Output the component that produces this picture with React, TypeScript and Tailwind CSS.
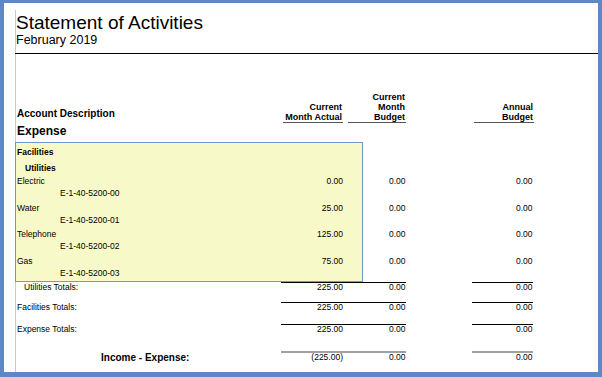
const accounts = [
  { name: 'Electric', code: 'E-1-40-5200-00', actual: '0.00' },
  { name: 'Water', code: 'E-1-40-5200-01', actual: '25.00' },
  { name: 'Telephone', code: 'E-1-40-5200-02', actual: '125.00' },
  { name: 'Gas', code: 'E-1-40-5200-03', actual: '75.00' },
];

const totals = [
  { label: 'Utilities Totals:', indent: 'pl-[8px]', h: 'h-[20px]', actual: '225.00' },
  { label: 'Facilities Totals:', indent: 'pl-[1px]', h: 'h-[22px]', actual: '225.00' },
  { label: 'Expense Totals:', indent: 'pl-[1px]', h: 'h-[27px]', actual: '225.00' },
];

function App() {
  return (
    <div className="w-[602px] h-[377px] bg-white border-solid border-[#5c88c8] border-t-[3px] border-l-[4px] border-r-[4px] border-b-[5px] overflow-hidden">
      <div className="ml-[11px] mt-[7px] h-[362px] border-l border-[#c9c9c9] pt-[3px] font-['Liberation_Sans',Arial,sans-serif] text-black">
        {/* Report title */}
        <div className="text-[19px] leading-[20px]">Statement of Activities</div>
        <div className="text-[12.5px] leading-[14px]">February 2019</div>
        <div className="mt-[6px] -ml-[1px] border-t border-black" />

        {/* Column headers */}
        <div className="h-[69px] flex items-end">
          <div className="w-[267px] pl-[1px] pb-[3px] text-[10px] font-bold leading-[12px]">Account Description</div>
          <div className="w-[60px] pr-[1px] text-right text-[9px] font-bold leading-[10px] border-b border-[#555]">
            <div>Current</div>
            <div>Month Actual</div>
          </div>
          <div className="ml-[5px] w-[58px] pr-[1px] text-right text-[9px] font-bold leading-[10px] border-b border-[#555]">
            <div>Current</div>
            <div>Month</div>
            <div>Budget</div>
          </div>
          <div className="ml-[68px] w-[60px] pr-[1px] text-right text-[9px] font-bold leading-[10px] border-b border-[#555]">
            <div>Annual</div>
            <div>Budget</div>
          </div>
        </div>

        <div className="mt-[1px] pl-[1px] text-[12px] font-bold leading-[14px]">Expense</div>

        {/* Detail rows */}
        <div className="mt-[4px] flex text-[8.5px]">
          <div className="-ml-[1px] w-[348px] border border-[#7598d0] bg-[#f8f9c8] pt-[3px]">
            <div className="h-[12px] leading-[12px] pl-[1px] font-bold">Facilities</div>
            <div className="mt-[4px] h-[12px] leading-[12px] pl-[9px] font-bold">Utilities</div>
            <div className="mt-[1px]">
              {accounts.map((a) => (
                <div key={a.code} className="h-[26.5px]">
                  <div className="h-[12px] leading-[12px] pl-[1px] pr-[19px] flex justify-between">
                    <span>{a.name}</span>
                    <span>{a.actual}</span>
                  </div>
                  <div className="h-[12px] leading-[12px] pl-[44px]">{a.code}</div>
                </div>
              ))}
            </div>
          </div>
          <div className="flex-1 pt-[33px]">
            {accounts.map((a) => (
              <div key={a.code} className="h-[26.5px] flex leading-[12px]">
                <div className="w-[43px] pr-[0.5px] text-right">0.00</div>
                <div className="w-[127px] pr-[0.5px] text-right">0.00</div>
              </div>
            ))}
          </div>
        </div>

        {/* Totals */}
        <div className="text-[8.5px]">
          {totals.map((t) => (
            <div key={t.label} className={`${t.h} flex items-start`}>
              <div className={`w-[265px] ${t.indent} mt-[1px] leading-[9px]`}>{t.label}</div>
              <div className="w-[125px] border-t border-black flex leading-[9px]">
                <div className="w-[62px] text-right">{t.actual}</div>
                <div className="w-[62.5px] text-right">0.00</div>
              </div>
              <div className="ml-[66px] w-[61px] pr-[0.5px] border-t border-black text-right leading-[9px]">0.00</div>
            </div>
          ))}
          <div className="flex items-start">
            <div className="w-[265px] pl-[85px] pt-[2px] text-[10px] font-bold leading-[10px]">Income - Expense:</div>
            <div className="w-[125px] border-t-2 border-[#a0a0a0] flex leading-[9px]">
              <div className="w-[62px] text-right">(225.00)</div>
              <div className="w-[62.5px] text-right">0.00</div>
            </div>
            <div className="ml-[66px] w-[61px] pr-[0.5px] border-t-2 border-[#a0a0a0] text-right leading-[9px]">0.00</div>
          </div>
        </div>
      </div>
    </div>
  );
}

export default App;
